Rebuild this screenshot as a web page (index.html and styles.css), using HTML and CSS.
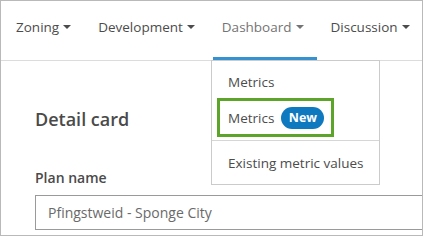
FILE: index.html
```html
<!DOCTYPE html>
<html lang="en">
<head>
<meta charset="utf-8">
<title>Dashboard menu</title>
<link rel="stylesheet" href="styles.css">
</head>
<body>
<div class="frame">
  <nav class="nav">
    <div class="tab"><span class="label">Zoning<span class="caret"></span></span></div>
    <div class="tab"><span class="label">Development<span class="caret"></span></span></div>
    <div class="tab active"><span class="label">Dashboard<span class="caret"></span></span></div>
    <div class="tab"><span class="label">Discussion<span class="caret"></span></span></div>
  </nav>
  <main class="content">
    <h2 class="card-title">Detail card</h2>
    <div class="field-label">Plan name</div>
    <div class="field-input">Pfingstweid - Sponge City</div>
  </main>
  <div class="dropdown">
    <div class="item first">Metrics</div>
    <div class="item highlight">Metrics<span class="badge">New</span></div>
    <div class="divider"></div>
    <div class="item last">Existing metric values</div>
  </div>
</div>
</body>
</html>
```
FILE: styles.css
```css
* { box-sizing: border-box; }
html, body { margin: 0; padding: 0; background: #fff; }
body {
  font-family: "Open Sans", "Noto Sans", sans-serif;
  font-size: 13.5px;
  color: #4c4c4c;
}
.frame {
  position: relative;
  width: 423px;
  height: 236px;
  border: 1px solid #b9b9b9;
  overflow: hidden;
  background: #fff;
}
.nav {
  display: flex;
  gap: 5px;
  height: 60px;
  padding-left: 6px;
  border-bottom: 1px solid #dcdcdc;
}
.tab {
  height: 59px;
  padding: 16px 13px 0 9px;
  line-height: 20px;
  color: #4c4c4c;
  white-space: nowrap;
}
.tab.active {
  color: #747474;
  border-bottom: 3px solid #3591cf;
}
.label {
  display: inline-flex;
  align-items: center;
  height: 20px;
}
.caret {
  width: 0;
  height: 0;
  margin-left: 4px;
  border-left: 4px solid transparent;
  border-right: 4px solid transparent;
  border-top: 4px solid currentColor;
}
.content {
  padding: 46px 0 0 34px;
}
.card-title {
  margin: 0;
  font-size: 18px;
  font-weight: 600;
  line-height: 24px;
  color: #4a4a4a;
}
.field-label {
  margin-top: 37px;
  font-size: 14px;
  font-weight: 600;
  line-height: 20px;
  color: #4a4a4a;
}
.field-input {
  margin-top: 7px;
  width: 420px;
  height: 35px;
  border: 1px solid #9a9a9a;
  padding-left: 12px;
  font-size: 14px;
  line-height: 33px;
  color: #6a6a6a;
  white-space: nowrap;
}
.dropdown {
  position: absolute;
  left: 210px;
  top: 59px;
  width: 169px;
  height: 125px;
  border: 1px solid #cbcbcb;
  background: #fff;
  z-index: 2;
}
.item {
  line-height: 20px;
  color: #4c4c4c;
  white-space: nowrap;
}
.item.first {
  padding: 11px 0 6px 16px;
}
.item.highlight {
  display: flex;
  align-items: center;
  width: 117px;
  height: 39px;
  margin-left: 5px;
  padding: 0 0 0 8px;
  border: 3px solid #5da52a;
}
.badge {
  display: inline-flex;
  align-items: center;
  justify-content: center;
  width: 43px;
  height: 22px;
  margin-left: 7px;
  border-radius: 11px;
  background: #0f79c0;
  color: #fff;
  font-size: 12.5px;
  font-weight: 700;
}
.divider {
  margin-top: 3px;
  height: 1px;
  background: #d6d6d6;
}
.item.last {
  padding: 12px 0 0 16px;
}
```
